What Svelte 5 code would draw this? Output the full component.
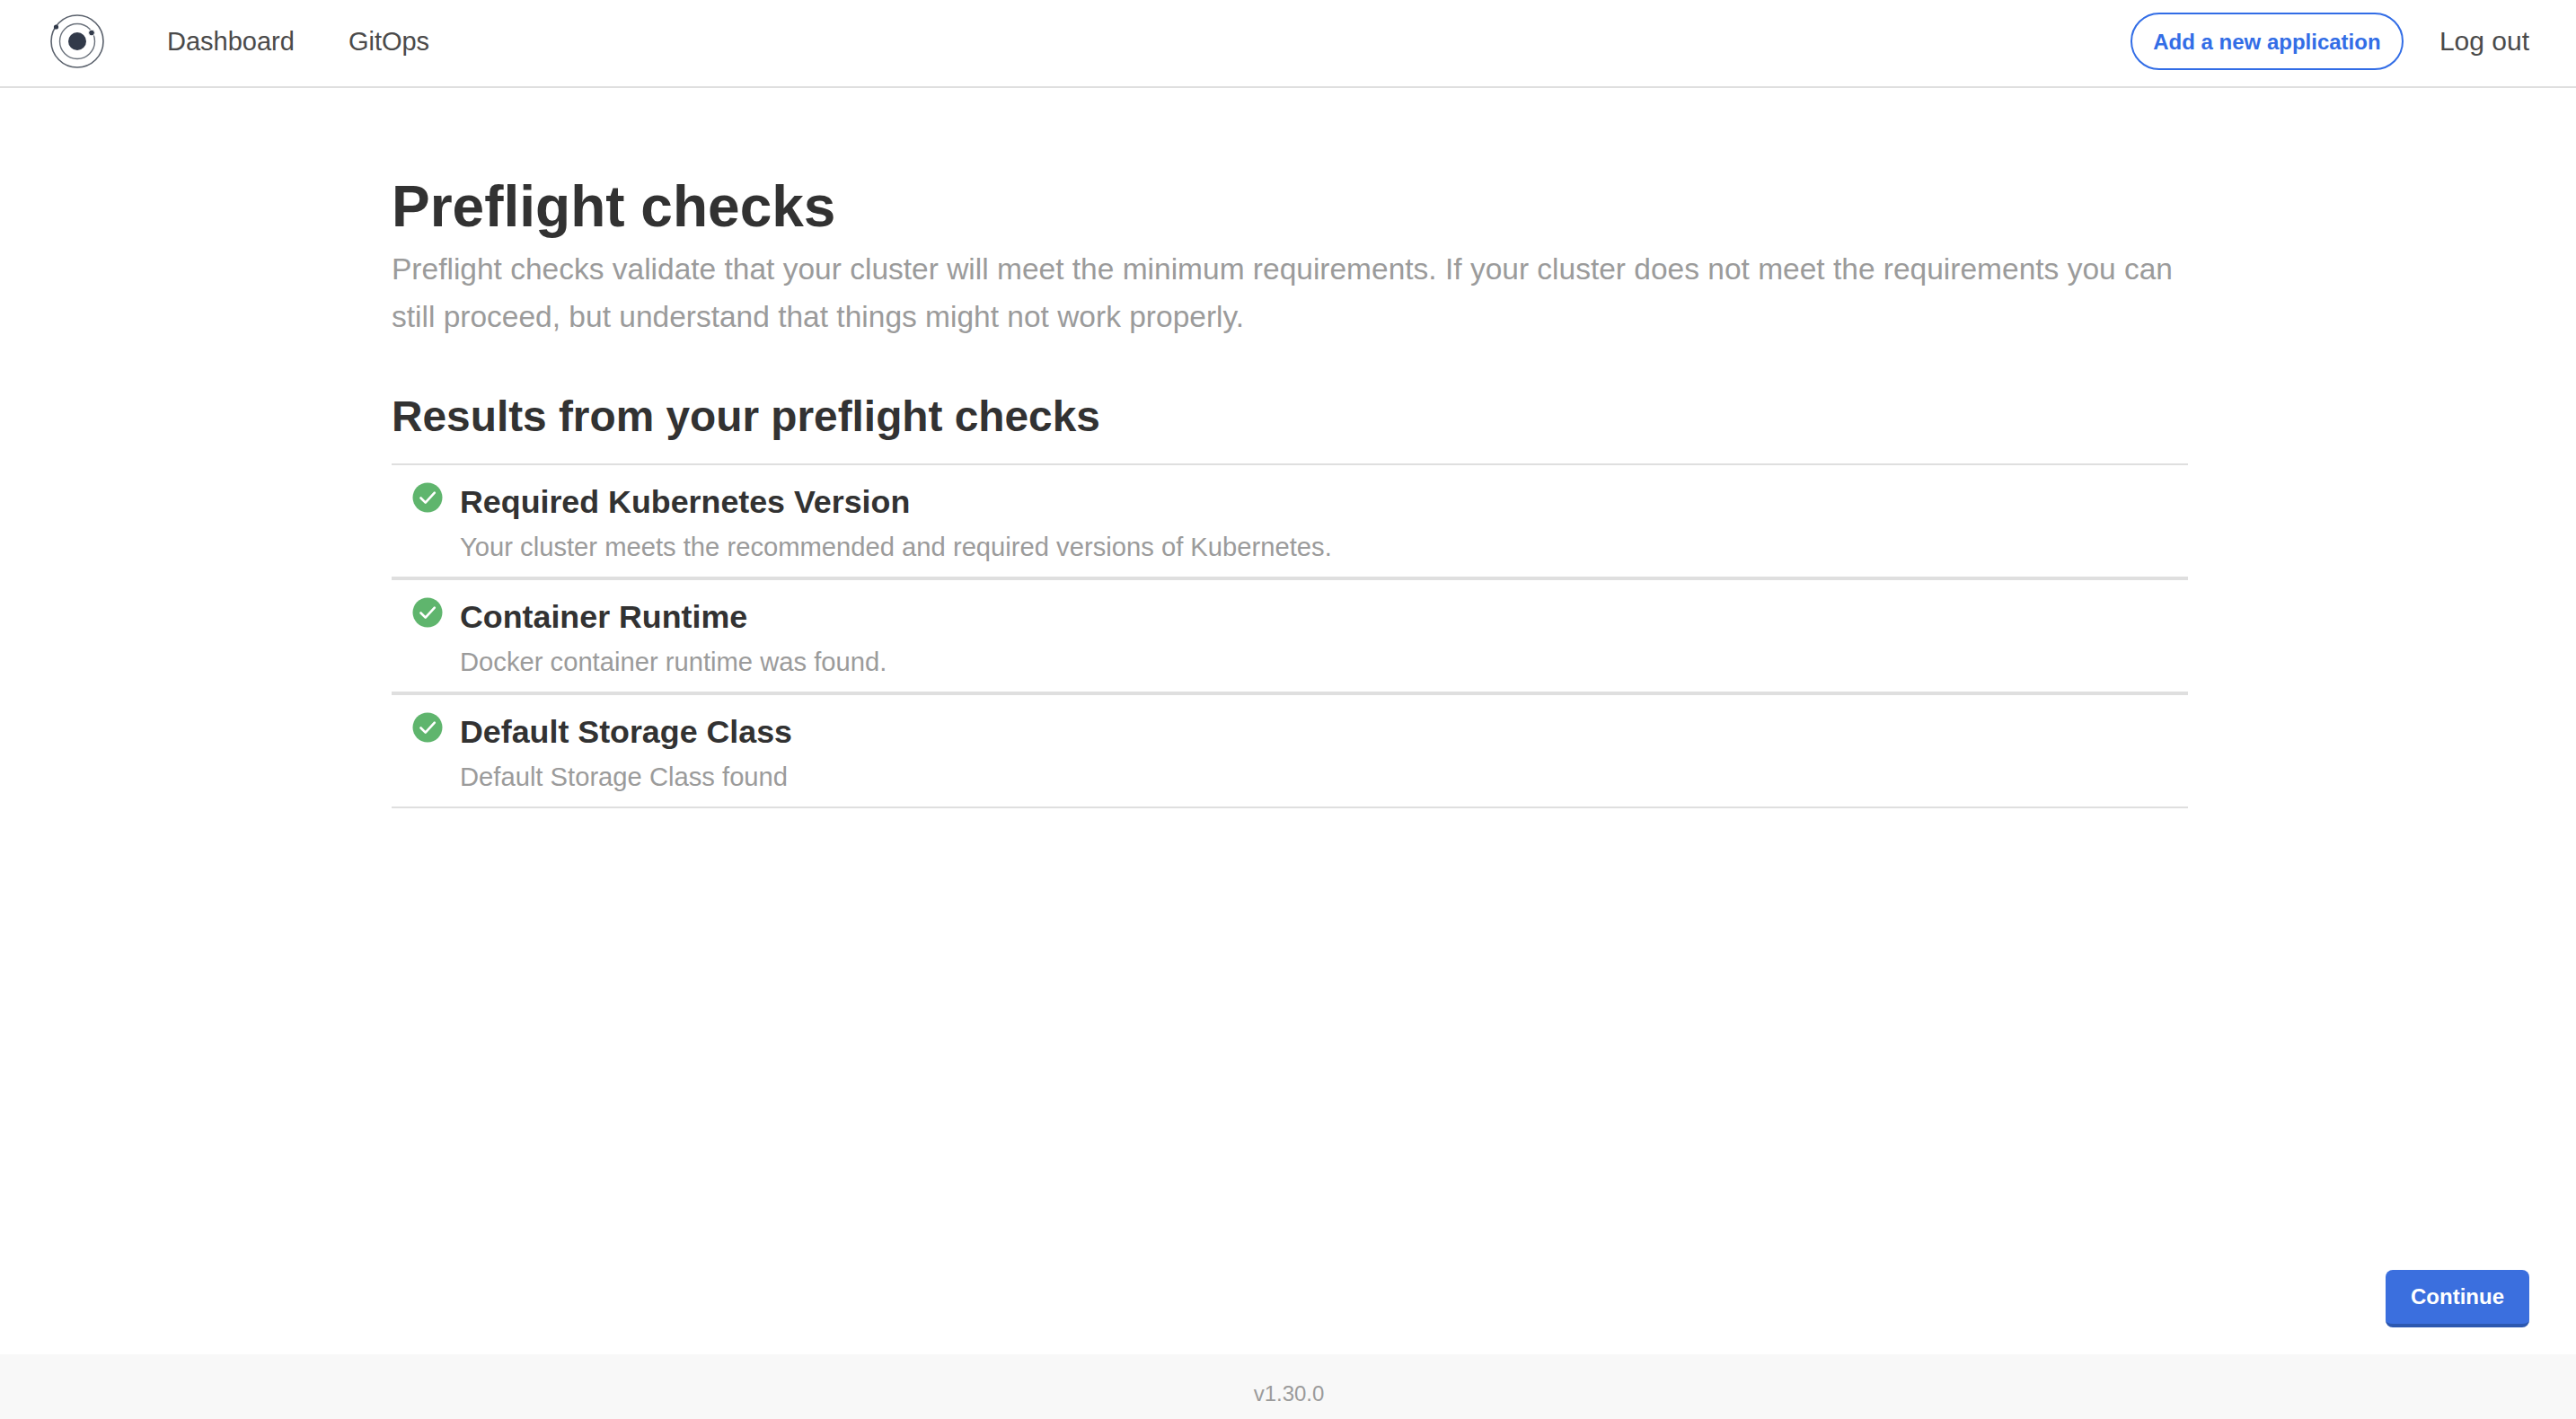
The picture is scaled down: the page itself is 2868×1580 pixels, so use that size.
<script>
    const checks = [
        { title: 'Required Kubernetes Version', message: 'Your cluster meets the recommended and required versions of Kubernetes.' },
        { title: 'Container Runtime', message: 'Docker container runtime was found.' },
        { title: 'Default Storage Class', message: 'Default Storage Class found' }
    ];
</script>

<div class="page">
    <header class="navbar">
        <svg class="logo" viewBox="0 0 60 60" aria-hidden="true">
            <circle cx="30" cy="30" r="29" fill="none" stroke="#5a616c" stroke-width="1.6" />
            <circle cx="30" cy="30" r="19.5" fill="none" stroke="#6a717b" stroke-width="1.4" />
            <circle cx="30" cy="30" r="10" fill="#323a4a" />
            <circle cx="46" cy="20.5" r="3.4" fill="#323a4a" stroke="#fff" stroke-width="1" />
            <circle cx="6.5" cy="14" r="2.6" fill="#323a4a" />
        </svg>
        <nav class="links">
            <a href="#dashboard">Dashboard</a>
            <a href="#gitops">GitOps</a>
        </nav>
        <div class="right">
            <button class="pill">Add a new application</button>
            <a class="logout" href="#logout">Log out</a>
        </div>
    </header>

    <main class="content">
        <h1>Preflight checks</h1>
        <p class="lead">Preflight checks validate that your cluster will meet the minimum requirements. If your cluster does not meet the requirements you can still proceed, but understand that things might not work properly.</p>
        <h2>Results from your preflight checks</h2>
        <ul class="results">
            {#each checks as check}
                <li>
                    <svg class="check" viewBox="0 0 34 34" aria-hidden="true">
                        <circle cx="17" cy="17" r="16.5" fill="#5fb56d" />
                        <path d="M9.5 17.5l5.2 5.2L24.8 11.6" fill="none" stroke="#fff" stroke-width="2.6" stroke-linecap="round" stroke-linejoin="round" />
                    </svg>
                    <div>
                        <p class="title">{check.title}</p>
                        <p class="message">{check.message}</p>
                    </div>
                </li>
            {/each}
        </ul>
    </main>

    <div class="actions">
        <button class="continue">Continue</button>
    </div>

    <footer>v1.30.0</footer>
</div>

<style>
    :global(body) {
        margin: 0;
        background: #fff;
    }

    .page {
        display: flex;
        flex-direction: column;
        height: 1580px;
        font-family: "Liberation Sans", Arial, sans-serif;
        color: #323232;
    }

    .navbar {
        display: flex;
        align-items: center;
        box-sizing: border-box;
        height: 98px;
        padding: 0 52px 4px 56px;
        border-bottom: 2px solid #dfdfdf;
        flex-shrink: 0;
    }

    .logo {
        width: 60px;
        height: 60px;
    }

    .links {
        display: flex;
        gap: 60px;
        margin-left: 70px;
    }

    a {
        font-size: 29px;
        color: #4a4a4a;
        text-decoration: none;
    }

    .logout {
        font-size: 30px;
    }

    .right {
        display: flex;
        align-items: center;
        gap: 40px;
        margin-left: auto;
    }

    .pill {
        width: 304px;
        height: 64px;
        padding: 2px 0 0;
        border: 2px solid #326de6;
        border-radius: 32px;
        background: #fff;
        color: #326de6;
        font: bold 24px "Liberation Sans", Arial, sans-serif;
    }

    .content {
        flex: 1;
        width: 2000px;
        margin-left: 436px;
    }

    h1 {
        margin: 95px 0 0;
        font-size: 64px;
        line-height: 74px;
        font-weight: bold;
    }

    .lead {
        margin: 6px 0 0;
        font-size: 33.5px;
        line-height: 53px;
        color: #9b9b9b;
    }

    h2 {
        margin: 55px 0 0;
        font-size: 47.8px;
        line-height: 60px;
        font-weight: bold;
    }

    .results {
        margin: 22px 0 0;
        padding: 0;
        list-style: none;
    }

    li {
        display: flex;
        gap: 19px;
        box-sizing: border-box;
        height: 128px;
        padding: 19px 0 0 23px;
        border-top: 2px solid #dfdfdf;
        border-bottom: 2px solid #dfdfdf;
    }

    .check {
        width: 34px;
        height: 34px;
        flex-shrink: 0;
    }

    li p {
        margin: 0;
    }

    .title {
        font-size: 35.8px;
        line-height: 44px;
        font-weight: bold;
    }

    .message {
        margin-top: 8px !important;
        font-size: 29.2px;
        line-height: 40px;
        color: #9b9b9b;
    }

    .actions {
        display: flex;
        justify-content: flex-end;
        padding: 0 52px 30px 0;
    }

    .continue {
        width: 160px;
        height: 64px;
        padding: 0;
        border: 0;
        border-bottom: 4px solid #2c58b0;
        border-radius: 8px;
        background: #3b6fde;
        color: #fff;
        font: bold 24px "Liberation Sans", Arial, sans-serif;
    }

    footer {
        display: flex;
        align-items: center;
        justify-content: center;
        height: 72px;
        padding: 16px 0 0 2px;
        box-sizing: border-box;
        background: #f8f8f8;
        color: #9b9b9b;
        font-size: 24px;
    }
</style>
